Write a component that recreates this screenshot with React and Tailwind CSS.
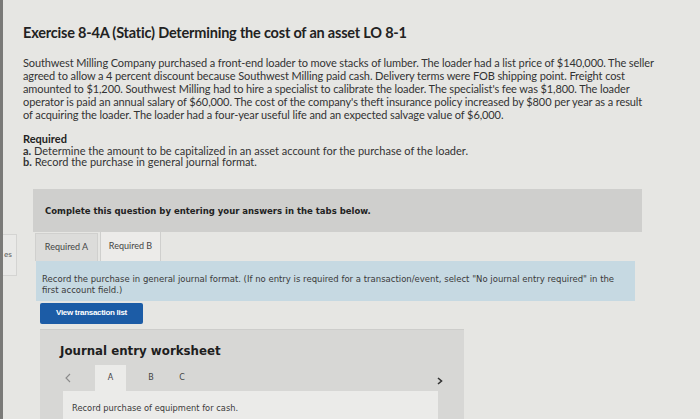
export default function App() {
  const para = [
    "Southwest Milling Company purchased a front-end loader to move stacks of lumber. The loader had a list price of $140,000. The seller",
    "agreed to allow a 4 percent discount because Southwest Milling paid cash. Delivery terms were FOB shipping point. Freight cost",
    "amounted to $1,200. Southwest Milling had to hire a specialist to calibrate the loader. The specialist's fee was $1,800. The loader",
    "operator is paid an annual salary of $60,000. The cost of the company's theft insurance policy increased by $800 per year as a result",
    "of acquiring the loader. The loader had a four-year useful life and an expected salvage value of $6,000.",
  ];
  const lato = { fontFamily: "Lato, 'Open Sans', sans-serif" };
  const verd = { fontFamily: "'DejaVu Sans', Verdana, sans-serif" };
  return (
    <div className="w-[700px] h-[419px] overflow-hidden bg-[#e6e6e3] flex text-[#2a2a2a]">
      <div className="w-[3px] h-full bg-[#7a7a78] shrink-0" />
      <div className="relative w-[14px] shrink-0">
        <div className="absolute top-[234px] left-0 w-[14px] h-[42px] border border-l-0 border-[#d4d4d2] bg-[#e9e9e7] text-[7px] text-[#555] flex items-center pl-[1px]" style={verd}>
          es
        </div>
      </div>
      <div className="flex-1 pl-[6px] pt-[24px]">
        <div className="text-[14.5px] leading-[18px] font-bold text-[#222] tracking-[-0.2px]" style={lato}>
          Exercise 8-4A (Static) Determining the cost of an asset LO 8-1
        </div>
        <div className="mt-[14px] text-[11px] leading-[13px] text-[#333] tracking-[-0.1px]" style={lato}>
          {para.map((l, i) => (
            <div key={i} className="whitespace-nowrap">{l}</div>
          ))}
        </div>
        <div className="mt-[12px] text-[11px] leading-[11.5px] text-[#333]" style={lato}>
          <div className="font-bold text-[#222]">Required</div>
          <div><span className="font-bold">a.</span> Determine the amount to be capitalized in an asset account for the purchase of the loader.</div>
          <div><span className="font-bold">b.</span> Record the purchase in general journal format.</div>
        </div>
        <div className="ml-[10px] mt-[21px] w-[609px] h-[43px] bg-[#cfcfcd] flex items-center pl-[12px] pt-[2px]">
          <span className="text-[8.5px] font-bold text-[#222]" style={verd}>
            Complete this question by entering your answers in the tabs below.
          </span>
        </div>
        <div className="ml-[12px] mt-[-1px] flex items-end gap-[2px] h-[30px]">
          <div className="w-[63px] h-[28px] bg-[#dcdcda] border border-b-0 border-[#d0d0ce] flex items-center justify-center text-[9px] text-[#444]" style={lato}>
            Required A
          </div>
          <div className="w-[61px] h-[30px] bg-[#ecebe9] border border-b-0 border-[#cfcfcd] flex items-center justify-center text-[9px] text-[#444]" style={lato}>
            Required B
          </div>
        </div>
        <div className="ml-[13px] w-[599px] h-[40px] bg-[#c6d9e2] pl-[6px] pt-[13px] text-[8.5px] leading-[11px] text-[#3a3a3a]" style={verd}>
          <div className="whitespace-nowrap">Record the purchase in general journal format. (If no entry is required for a transaction/event, select "No journal entry required" in the</div>
          <div>first account field.)</div>
        </div>
        <div className="ml-[17px] mt-[2px] w-[103px] h-[21px] bg-[#1c5ca6] rounded-[2px] flex items-center justify-center text-white text-[8px] font-bold tracking-[-0.3px]" style={{ fontFamily: "'Liberation Sans', Arial, sans-serif" }}>
          View transaction list
        </div>
        <div className="ml-[17px] mt-[5px] w-[424px] h-[100px] bg-[#d7d7d5] border-t border-[#cdcdcb] pl-[20px] pt-[13px]">
          <div className="text-[11.8px] font-bold text-[#1e1e1e] leading-[16px]" style={verd}>Journal entry worksheet</div>
          <div className="ml-[3px] mt-[6px] flex items-end h-[26px] text-[8px] text-[#444]" style={verd}>
            <div className="w-[32px] h-[26px] flex items-center pl-[2px]">
              <svg width="6" height="10" viewBox="0 0 6 10" fill="none" stroke="#8a8a8a" strokeWidth="1.1">
                <path d="M5 1 L1 5 L5 9" />
              </svg>
            </div>
            <div className="w-[31px] h-[26px] bg-[#ebebe9] flex items-center justify-center">A</div>
            <div className="w-[18px]" />
            <div className="w-[14px] h-[26px] flex items-center justify-center">B</div>
            <div className="w-[19px]" />
            <div className="w-[10px] h-[26px] flex items-center justify-center">C</div>
            <div className="flex-1" />
            <div className="w-[27px] h-[26px] flex items-start pt-[12px]">
              <svg width="6" height="8" viewBox="0 0 6 8" fill="none" stroke="#333" strokeWidth="1.6">
                <path d="M1 1 L4.5 4 L1 7" />
              </svg>
            </div>
          </div>
          <div className="ml-[3px] w-[375px] h-[40px] bg-[#ebebe9] pl-[9px] pt-[11px] text-[8.3px] text-[#3a3a3a]" style={verd}>
            Record purchase of equipment for cash.
          </div>
        </div>
      </div>
    </div>
  );
}
